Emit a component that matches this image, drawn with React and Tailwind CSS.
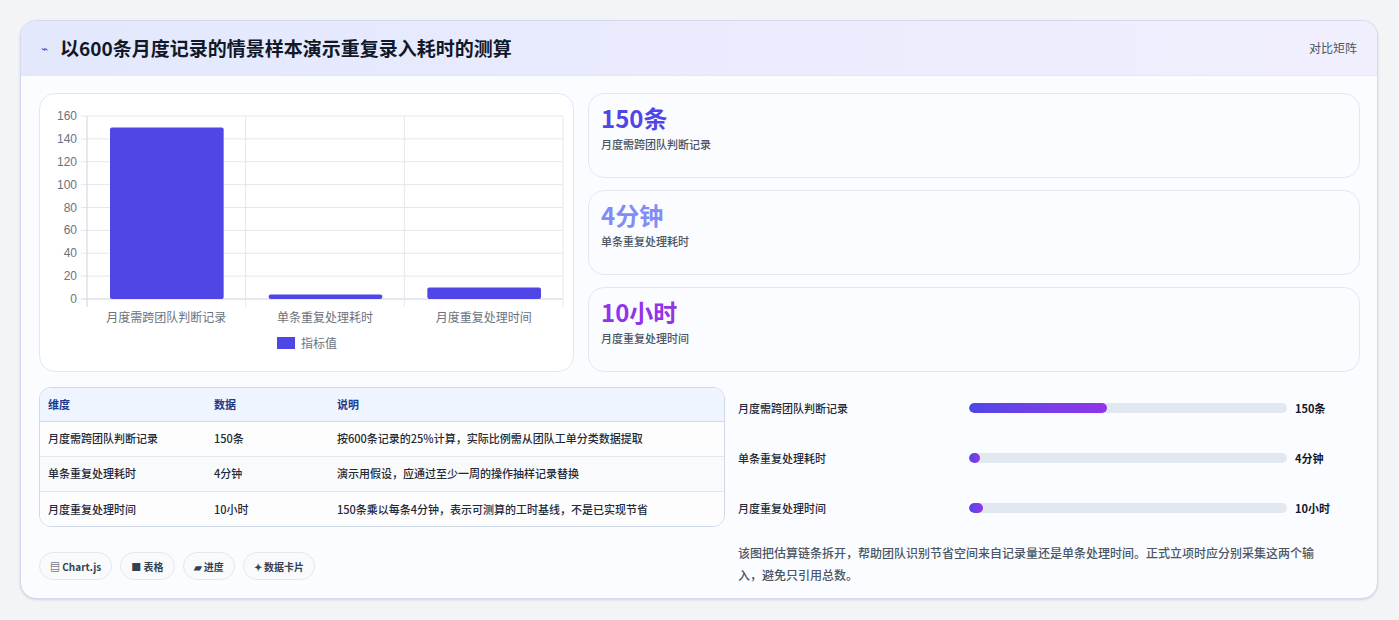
import React from 'react';

const font = { fontFamily: '"Noto Sans CJK SC", "Noto Sans", sans-serif' };

const stats = [
  { v: '150条', l: '月度需跨团队判断记录', c: 'text-[#4f46e5]' },
  { v: '4分钟', l: '单条重复处理耗时', c: 'text-[#818cf8]' },
  { v: '10小时', l: '月度重复处理时间', c: 'text-[#9333ea]' },
];

const rows = [
  ['月度需跨团队判断记录', '150条', '按600条记录的25%计算，实际比例需从团队工单分类数据提取'],
  ['单条重复处理耗时', '4分钟', '演示用假设，应通过至少一周的操作抽样记录替换'],
  ['月度重复处理时间', '10小时', '150条乘以每条4分钟，表示可测算的工时基线，不是已实现节省'],
];

const bars = [
  { l: '月度需跨团队判断记录', v: '150条', w: 43.5 },
  { l: '单条重复处理耗时', v: '4分钟', w: 3.5 },
  { l: '月度重复处理时间', v: '10小时', w: 4.5 },
];

function Chart() {
  const x0 = 47, x1 = 523, yTop = 22, yBot = 205;
  const ticks = [0, 20, 40, 60, 80, 100, 120, 140, 160];
  const y = (v) => yBot - (v / 160) * (yBot - yTop);
  const cw = (x1 - x0) / 3;
  const data = [150, 4, 10];
  const labels = ['月度需跨团队判断记录', '单条重复处理耗时', '月度重复处理时间'];
  return (
    <svg width="535" height="279" className="block">
      {ticks.map((t) => (
        <g key={t}>
          <line x1={x0 - 6} x2={x1} y1={y(t)} y2={y(t)} stroke={t === 0 ? '#cbd5e1' : '#e5e7eb'} />
          <text x={x0 - 10} y={y(t) + 4} textAnchor="end" fontSize="12" fill="#6b7280" fontFamily="Liberation Sans, sans-serif">{t}</text>
        </g>
      ))}
      {[0, 1, 2, 3].map((i) => (
        <line key={i} x1={x0 + i * cw} x2={x0 + i * cw} y1={yTop} y2={yBot + 8} stroke={i === 0 ? '#cbd5e1' : '#e5e7eb'} />
      ))}
      {data.map((d, i) => (
        <rect key={i} x={x0 + i * cw + 23} y={y(d)} width={cw - 45} height={yBot - y(d)} rx="2" fill="#4f46e5" />
      ))}
      {labels.map((l, i) => (
        <text key={i} x={x0 + i * cw + cw / 2} y="228" textAnchor="middle" fontSize="12" fill="#6b7280" style={font}>{l}</text>
      ))}
      <rect x="237" y="243" width="18" height="12" fill="#4f46e5" />
      <text x="261" y="254" fontSize="12" fill="#6b7280" style={font}>指标值</text>
    </svg>
  );
}

export default function App() {
  return (
    <div className="w-[1399px] h-[620px] bg-[#f3f4f6] pt-5 pl-5" style={font}>
      <div className="w-[1358px] h-[579px] rounded-2xl border border-[#d4d8f0] bg-[#fbfcff] overflow-hidden shadow-sm">
        <div className="h-[55px] flex items-center justify-between px-5 bg-gradient-to-r from-[#e3e8fd] to-[#f1effd] border-b border-[#e3e7f5]">
          <div className="flex items-center gap-3">
            <span className="text-[#3b5bdb] text-xs">⌁</span>
            <h1 className="text-[19px] font-bold text-[#111827]">以600条月度记录的情景样本演示重复录入耗时的测算</h1>
          </div>
          <span className="text-xs text-[#4b5563]">对比矩阵</span>
        </div>
        <div className="pl-[18px] pr-[17px] pt-[17px]">
          <div className="flex gap-[14px]">
            <div className="w-[535px] h-[279px] rounded-2xl border border-[#e3e7f1] bg-white">
              <Chart />
            </div>
            <div className="flex-1 flex flex-col gap-3">
              {stats.map((s) => (
                <div key={s.v} className="h-[85px] rounded-2xl border border-[#e3e7f1] bg-[#fbfcff] px-3 pt-2">
                  <div className={`text-2xl font-bold ${s.c}`}>{s.v}</div>
                  <div className="text-[11px] font-medium text-[#4b5563] mt-0.5">{s.l}</div>
                </div>
              ))}
            </div>
          </div>
          <div className="flex gap-[13px] mt-[15px]">
            <div className="w-[686px]">
              <div className="rounded-xl border border-[#cfd8e6] overflow-hidden">
                <table className="w-full text-[11px] font-medium text-[#1f2937]">
                  <thead>
                    <tr className="bg-[#eef5ff] text-[#1e3a8a] border-b border-[#cfd8e6] h-[33px] text-left">
                      <th className="pl-2 w-[174px] font-bold">维度</th>
                      <th className="w-[123px] font-bold">数据</th>
                      <th className="font-bold">说明</th>
                    </tr>
                  </thead>
                  <tbody>
                    {rows.map((r, i) => (
                      <tr key={i} className={`h-[35px] ${i < 2 ? 'border-b border-[#e2e8f0]' : ''} ${i === 1 ? 'bg-[#f8fafc]' : 'bg-[#fdfdfe]'}`}>
                        <td className="pl-2">{r[0]}</td>
                        <td>{r[1]}</td>
                        <td>{r[2]}</td>
                      </tr>
                    ))}
                  </tbody>
                </table>
              </div>
              <div className="flex gap-2 mt-[25px]">
                {['▤ Chart.js', '■ 表格', '▰ 进度', '✦ 数据卡片'].map((c) => (
                  <span key={c} className="h-7 px-2.5 flex items-center rounded-full border border-[#e5e7eb] bg-[#f8fafc] text-[10px] font-bold text-[#334155]">{c}</span>
                ))}
              </div>
            </div>
            <div className="flex-1">
              <div className="flex flex-col gap-[34px] pt-[13px]">
                {bars.map((b) => (
                  <div key={b.l} className="flex items-center h-4">
                    <span className="w-[231px] text-[11px] font-medium text-[#1f2937]">{b.l}</span>
                    <div className="w-[318px] h-[10px] rounded-full bg-[#e2e8f0] overflow-hidden">
                      <div className="h-full rounded-full bg-gradient-to-r from-[#4f46e5] to-[#9333ea]" style={{ width: `${b.w}%` }} />
                    </div>
                    <span className="ml-2 text-[11px] font-bold text-[#111827]">{b.v}</span>
                  </div>
                ))}
              </div>
              <p className="mt-[26px] text-xs font-medium leading-[22px] text-[#4b5563] pr-7">该图把估算链条拆开，帮助团队识别节省空间来自记录量还是单条处理时间。正式立项时应分别采集这两个输入，避免只引用总数。</p>
            </div>
          </div>
        </div>
      </div>
    </div>
  );
}
